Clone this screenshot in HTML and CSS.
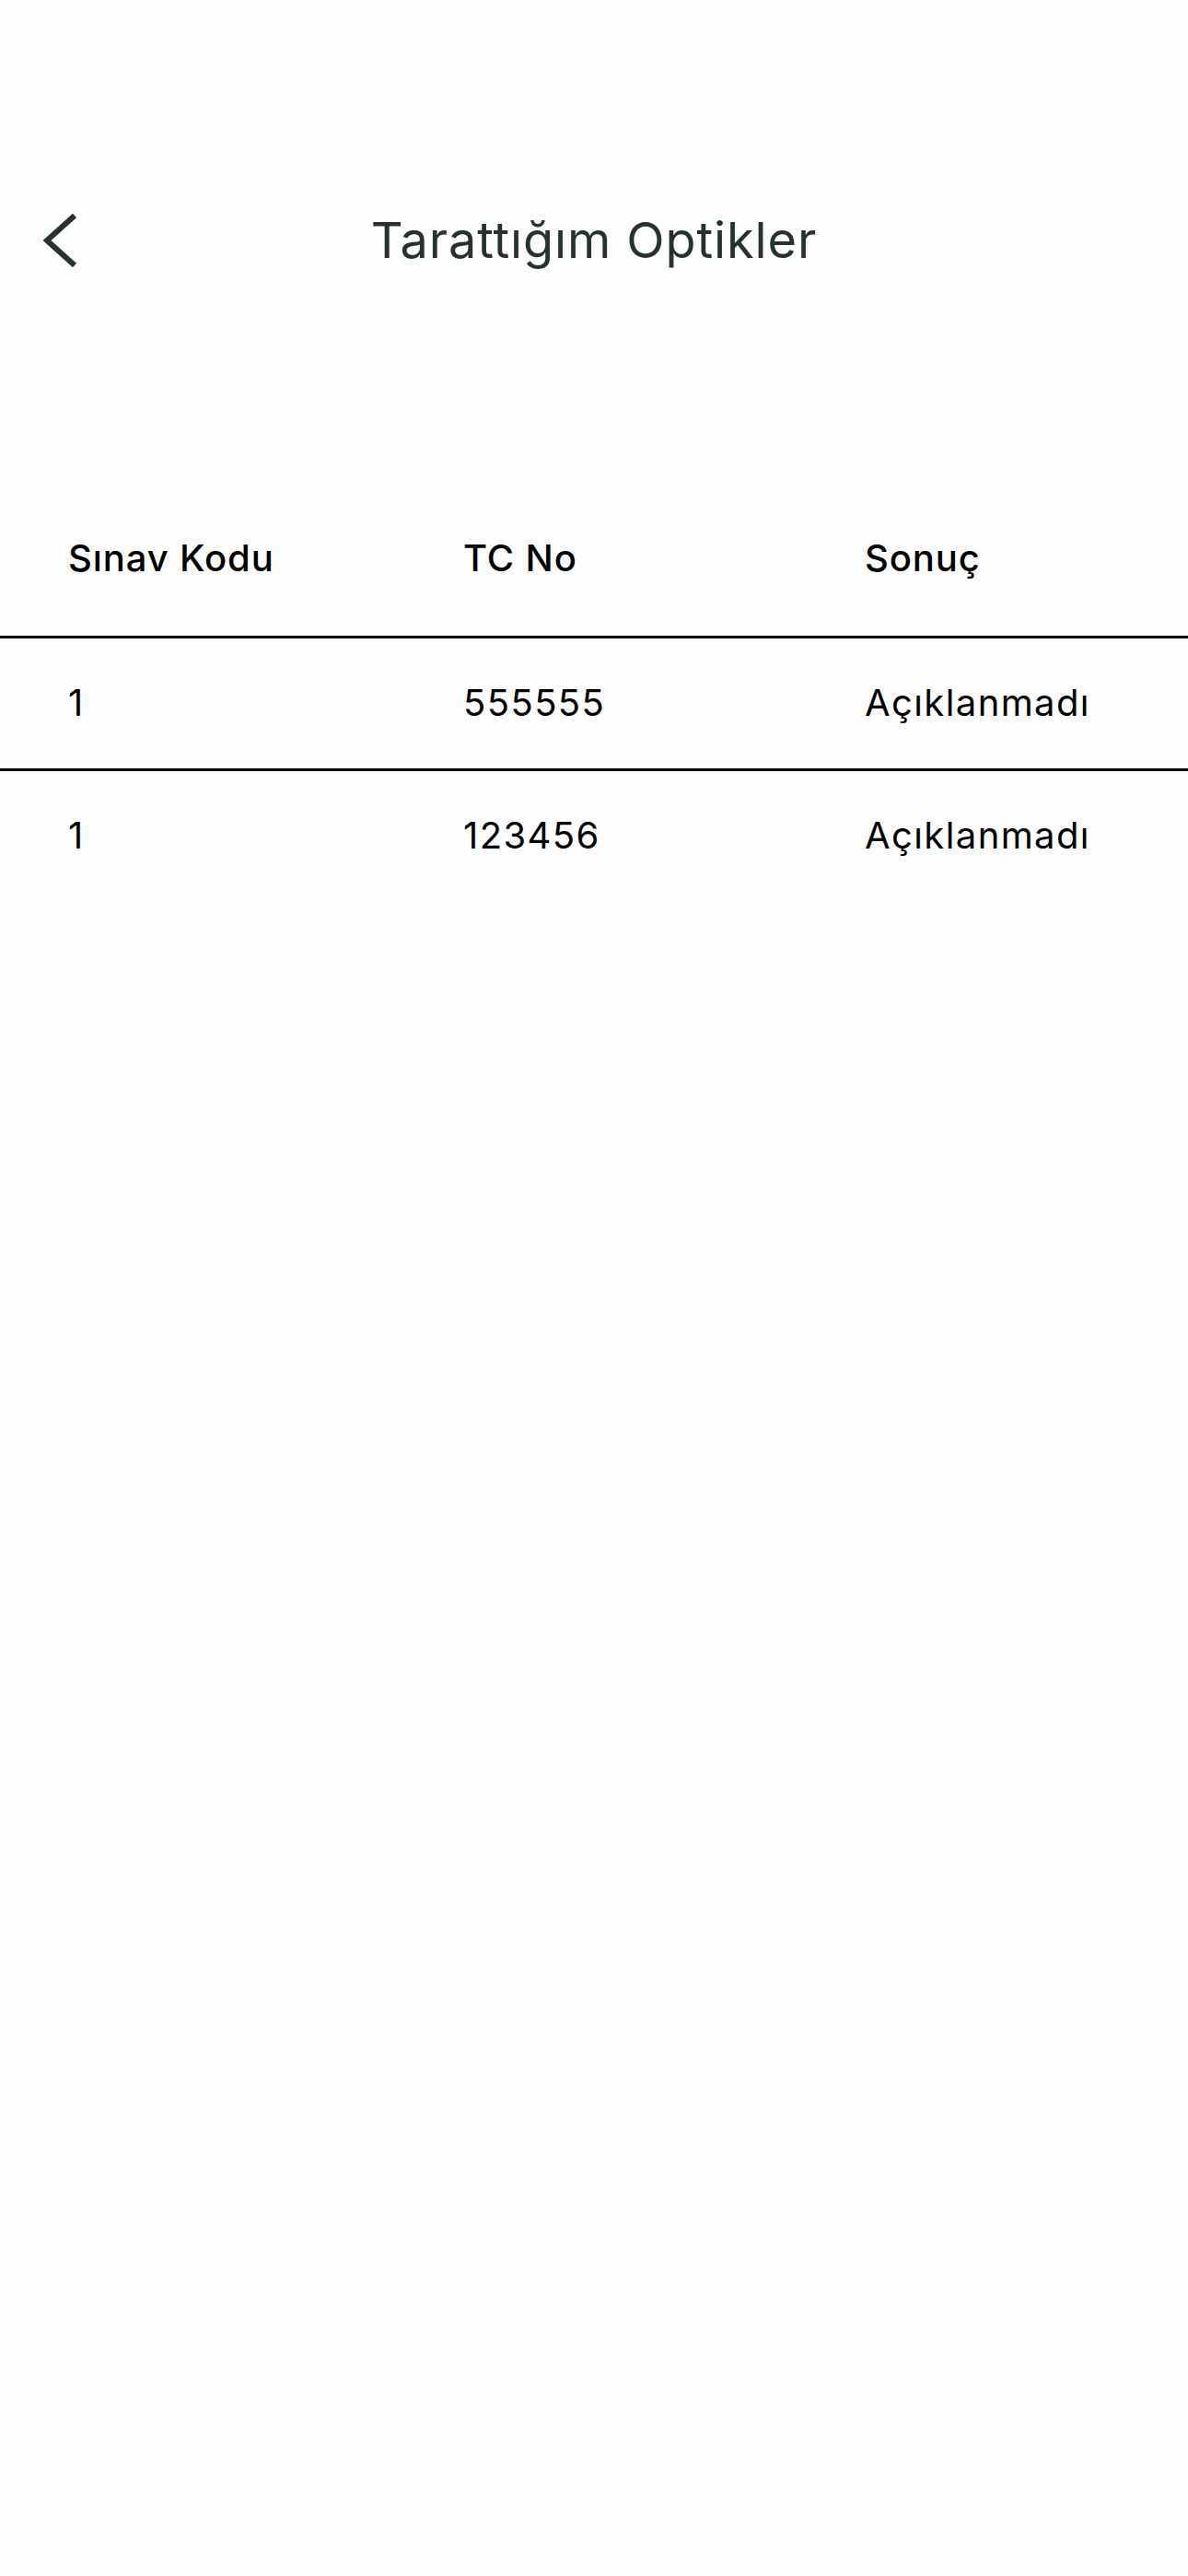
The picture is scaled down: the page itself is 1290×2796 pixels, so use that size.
FILE: index.html
```html
<!DOCTYPE html>
<html lang="tr">
<head>
<meta charset="utf-8">
<title>Tarattığım Optikler</title>
<link rel="stylesheet" href="styles.css">
</head>
<body>
<div class="screen">
  <header class="nav">
    <div class="nav-side">
      <svg class="back" viewBox="0 0 44 66" width="44" height="66" aria-hidden="true">
        <polyline points="37,6 7,33 37,60" fill="none" stroke="#263232" stroke-width="6" stroke-linejoin="miter" stroke-linecap="butt"/>
      </svg>
    </div>
    <h1 class="title">Tarattığım Optikler</h1>
    <div class="nav-side"></div>
  </header>

  <div class="table">
    <div class="row head">
      <div class="cell">Sınav Kodu</div>
      <div class="cell">TC No</div>
      <div class="cell">Sonuç</div>
    </div>
    <div class="row">
      <div class="cell">1</div>
      <div class="cell">555555</div>
      <div class="cell">Açıklanmadı</div>
    </div>
    <div class="row">
      <div class="cell">1</div>
      <div class="cell">123456</div>
      <div class="cell">Açıklanmadı</div>
    </div>
  </div>
</div>
</body>
</html>
```

FILE: styles.css
```css
html, body {
  margin: 0;
  padding: 0;
  background: #fdfdfd;
}

.screen {
  width: 1290px;
  min-height: 2796px;
  background: #fdfdfd;
  font-family: Inter, "Noto Sans", "Liberation Sans", sans-serif;
  padding-top: 201px;
  box-sizing: border-box;
}

.nav {
  height: 120px;
  display: grid;
  grid-template-columns: 1fr auto 1fr;
  align-items: center;
  padding: 0 44px;
}

.nav-side {
  display: flex;
  align-items: center;
}

.back {
  display: block;
}

.title {
  margin: 0;
  font-size: 54px;
  line-height: 64px;
  font-weight: 400;
  color: #263232;
  letter-spacing: 0.9px;
}

.table {
  margin-top: 261px;
}

.row {
  display: grid;
  grid-template-columns: 429px 436px 1fr;
  padding: 46px 0 47px 74px;
  border-top: 3px solid #000;
}

.row.head {
  border-top: none;
  padding-top: 0;
  padding-bottom: 60px;
}

.cell {
  font-size: 40px;
  line-height: 48px;
  color: #000;
  letter-spacing: 1.4px;
  font-weight: 400;
}

.head .cell {
  font-weight: 500;
  letter-spacing: 0.9px;
}
```
